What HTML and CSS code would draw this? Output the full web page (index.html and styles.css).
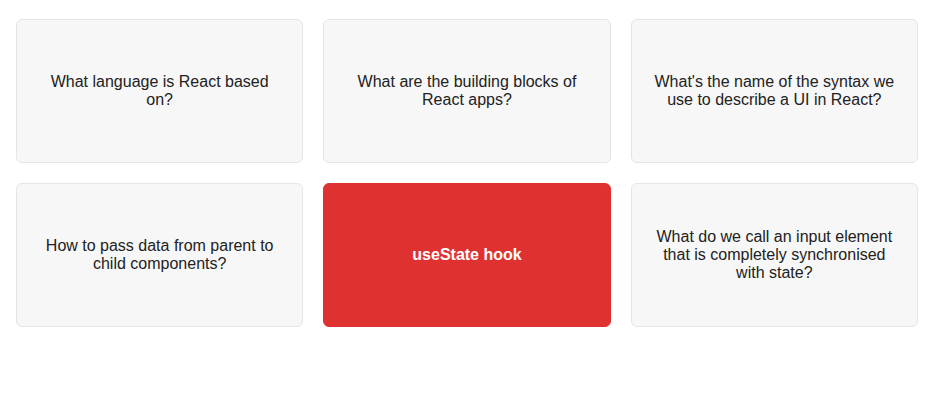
FILE: index.html
```html
<!DOCTYPE html>
<html>
<head>
<meta charset="utf-8">
<link rel="stylesheet" href="styles.css">
</head>
<body>
<div class="flashcards">
  <div class="card">What language is React based on?</div>
  <div class="card">What are the building blocks of React apps?</div>
  <div class="card">What's the name of the syntax we use to describe a UI in React?</div>
  <div class="card">How to pass data from parent to child components?</div>
  <div class="card selected">useState hook</div>
  <div class="card">What do we call an input element that is completely synchronised with state?</div>
</div>
</body>
</html>
```
FILE: styles.css
```css
* { box-sizing: border-box; }
body {
  margin: 0;
  font-family: "Liberation Sans", Arial, sans-serif;
  color: #222;
  background: #fff;
}
.flashcards {
  display: grid;
  width: 934px;
  grid-template-columns: repeat(3, 1fr);
  gap: 20px 20px;
  padding: 19px 16px;
}
.card {
  height: 144px;
  border: 1px solid #e5e5e5;
  background: #f7f7f7;
  border-radius: 6px;
  padding: 20px;
  display: flex;
  align-items: center;
  justify-content: center;
  text-align: center;
  font-size: 16px;
  line-height: 18px;
}
.card.selected {
  background: #e03131;
  border-color: #e03131;
  color: #fff;
  font-weight: bold;
}
```
